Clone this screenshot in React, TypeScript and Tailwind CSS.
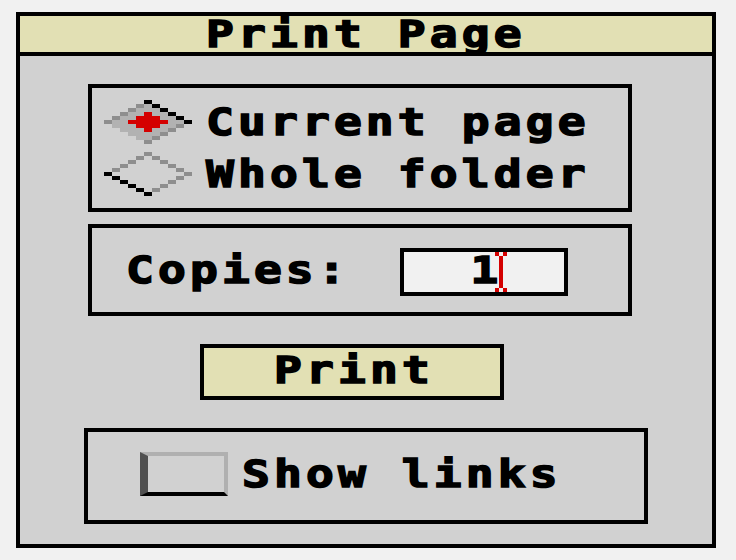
import React from "react";

const GRAY = "#8e8e8e";
const LIGHT = "#b2b2b2";

function Diamond({ selected }: { selected: boolean }) {
  const rects: React.ReactNode[] = [];
  for (let k = 0; k <= 10; k++) {
    const d = k <= 5 ? k : 10 - k;
    const y = 4 * k;
    const l = 40 - 8 * d;
    const r = 40 + 8 * d;
    if (selected && r - l > 8) {
      rects.push(<rect key={"f" + k} x={l + 8} y={y} width={r - l - 8} height={4} fill={LIGHT} />);
    }
    let lc: string;
    let rc: string;
    if (k < 5) {
      lc = GRAY;
      rc = selected ? "#000" : GRAY;
      if (k === 0) lc = rc;
    } else if (k === 5) {
      lc = selected ? GRAY : "#000";
      rc = selected ? "#000" : GRAY;
    } else {
      lc = selected ? LIGHT : "#000";
      rc = GRAY;
      if (k === 10) {
        lc = selected ? GRAY : "#000";
        rc = lc;
      }
    }
    rects.push(<rect key={"l" + k} x={l} y={y} width={8} height={4} fill={lc} />);
    if (r !== l) rects.push(<rect key={"r" + k} x={r} y={y} width={8} height={4} fill={rc} />);
  }
  if (selected) {
    rects.push(<rect key="c1" x={40} y={12} width={8} height={20} fill="#d40000" />);
    rects.push(<rect key="c2" x={32} y={16} width={24} height={12} fill="#d40000" />);
    rects.push(<rect key="c3" x={24} y={20} width={40} height={4} fill="#d40000" />);
  }
  return (
    <svg width={88} height={44} viewBox="0 0 88 44" shapeRendering="crispEdges" className="shrink-0">
      {rects}
    </svg>
  );
}

function T({ children, center }: { children: React.ReactNode; center?: boolean }) {
  return (
    <span
      className={
        "inline-block whitespace-pre font-['DejaVu_Sans_Mono',monospace] font-bold text-[37px] leading-[37px] tracking-[3.3px] scale-x-[1.25] text-black [-webkit-text-stroke:1.5px_black] " +
        (center ? "origin-center" : "origin-left")
      }
    >
      {children}
    </span>
  );
}

function Caret() {
  return (
    <svg width={12} height={40} viewBox="0 0 12 40" shapeRendering="crispEdges" className="shrink-0 ml-[-3px]">
      <rect x={0} y={0} width={4} height={4} fill="#d40000" />
      <rect x={8} y={0} width={4} height={4} fill="#d40000" />
      <rect x={4} y={4} width={4} height={32} fill="#d40000" />
      <rect x={0} y={36} width={4} height={4} fill="#d40000" />
      <rect x={8} y={36} width={4} height={4} fill="#d40000" />
    </svg>
  );
}

export default function App() {
  return (
    <div className="w-[736px] h-[560px] bg-[#f1f1f1] pl-[16px] pt-[12px]">
      <div className="w-[700px] h-[536px] border-4 border-black bg-[#d1d1d1] flex flex-col">
        <div className="h-[40px] shrink-0 border-b-4 border-black bg-[#e2e0b4] flex justify-center items-start">
          <T center>Print Page</T>
        </div>
        <div className="flex flex-col pt-[28px]">
          <div className="ml-[68px] w-[544px] h-[128px] border-4 border-black flex flex-col pt-[12px] pl-[12px] gap-[8px]">
            <div className="flex items-start h-[44px] gap-[14px]">
              <Diamond selected />
              <span className="mt-[4px]">
                <T>Current page</T>
              </span>
            </div>
            <div className="flex items-start h-[44px] gap-[14px]">
              <Diamond selected={false} />
              <span className="mt-[4px]">
                <T>Whole folder</T>
              </span>
            </div>
          </div>
          <div className="ml-[68px] mt-[12px] w-[544px] h-[92px] border-4 border-black flex items-start pt-[20px] pl-[34px] pr-[60px]">
            <span className="mt-[4px]">
              <T>Copies:</T>
            </span>
            <div className="ml-auto w-[168px] h-[48px] border-4 border-black bg-[#f1f1f1] flex items-start justify-end pr-[57px]">
              <span className="inline-block whitespace-pre font-['DejaVu_Sans_Mono',monospace] font-bold text-[37px] leading-[37px] scale-x-[1.25] origin-right text-black [-webkit-text-stroke:1.5px_black]">
                1
              </span>
              <Caret />
            </div>
          </div>
          <div className="ml-[180px] mt-[28px] w-[304px] h-[56px] border-4 border-black bg-[#e2e0b4] flex justify-center items-start pt-[4px] pl-[4px]">
            <T center>Print</T>
          </div>
          <div className="ml-[64px] mt-[28px] w-[564px] h-[96px] border-4 border-black flex items-start pt-[20px] pl-[52px] gap-[14px]">
            <div className="w-[88px] h-[44px] shrink-0 border-l-8 border-l-[#505050] border-t-4 border-t-[#b0b0b0] border-r-4 border-r-[#b0b0b0] border-b-4 border-b-black" />
            <span className="mt-[4px]">
              <T>Show links</T>
            </span>
          </div>
        </div>
      </div>
    </div>
  );
}
